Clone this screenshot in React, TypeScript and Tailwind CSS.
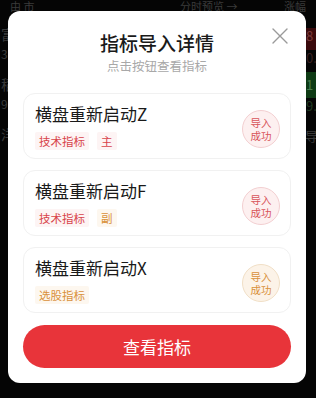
import React from 'react';

const items = [
  { name: '横盘重新启动Z', tags: [{ t: '技术指标', c: 'red' }, { t: '主', c: 'red' }], badge: 'red' },
  { name: '横盘重新启动F', tags: [{ t: '技术指标', c: 'red' }, { t: '副', c: 'orange' }], badge: 'red' },
  { name: '横盘重新启动X', tags: [{ t: '选股指标', c: 'orange' }], badge: 'orange' },
];

function Tag({ t, c }: { t: string; c: string }) {
  return (
    <span
      className={
        c === 'red'
          ? 'px-[4px] h-[18px] leading-[18px] text-[11.5px] rounded-[2px] bg-[#fdf4f4] text-[#d8434a]'
          : 'px-[4px] h-[18px] leading-[18px] text-[11.5px] rounded-[2px] bg-[#fdf7ef] text-[#d9903a]'
      }
    >
      {t}
    </span>
  );
}

export default function App() {
  return (
    <div
      className="relative w-[316px] h-[398px] bg-[#050505] overflow-hidden"
      style={{ fontFamily: '"Noto Sans CJK SC", "Noto Sans", sans-serif' }}
    >
      {/* dimmed page behind */}
      <div className="flex flex-col text-[#3a3a3a] text-[15px]">
        <div className="flex items-center h-[12px] px-[10px] text-[11px] leading-[12px]">
          <span className="w-[160px]">由 市</span>
          <span className="ml-[10px]">分时预览 →</span>
          <span className="ml-auto">涨幅</span>
        </div>
        <div className="flex flex-col pl-[1px] pt-[14px] gap-[4px] text-[14px] leading-[16px]">
          <span>富</span>
          <span className="text-[12px]">3</span>
          <span className="mt-[10px]">稻</span>
          <span className="text-[12px]">9</span>
          <span className="mt-[10px]">洋</span>
        </div>
      </div>
      <div className="absolute right-0 top-[28px] w-[12px] flex flex-col text-[13px] leading-[16px]">
        <span className="h-[22px] bg-[#3a0a0c] text-[#7a3a3a] pl-[2px]">8</span>
        <span className="h-[22px] text-[#3a2020] pl-[2px]">0.</span>
        <span className="h-[26px] bg-[#0e3a14] text-[#4a7a4a] pl-[2px] leading-[26px]">1</span>
        <span className="h-[22px] text-[#203a20] pl-[2px]">9.</span>
        <span className="h-[22px] mt-[8px] text-[#3a3a3a] pl-[1px]">导</span>
      </div>

      {/* dialog */}
      <div className="absolute left-[8px] top-[11px] w-[298px] h-[372px] bg-white rounded-[12px] flex flex-col px-[15px]">
        <div className="relative flex flex-col items-center pt-[20px]">
          <div className="text-[19px] leading-[24px] font-medium text-[#1a1a1a]">指标导入详情</div>
          <div className="text-[12.5px] leading-[18px] mt-[2px] text-[#a8a8a8]">点击按钮查看指标</div>
          <button className="absolute right-[2px] top-[16px] w-[18px] h-[18px]">
            <svg viewBox="0 0 18 18" width="18" height="18" fill="none" stroke="#9a9a9a" strokeWidth="1.4" strokeLinecap="round">
              <path d="M2 2 L16 16 M16 2 L2 16" />
            </svg>
          </button>
        </div>

        <div className="flex flex-col gap-[11px] mt-[18px]">
          {items.map((it) => (
            <div
              key={it.name}
              className="h-[66px] rounded-[12px] border border-[#f1f1f1] flex items-center pl-[11px] pr-[10px]"
            >
              <div className="flex flex-col flex-1">
                <div className="text-[17px] leading-[22px] text-[#1a1a1a]">{it.name}</div>
                <div className="flex gap-[8px] mt-[7px]">
                  {it.tags.map((tg) => (
                    <Tag key={tg.t} t={tg.t} c={tg.c} />
                  ))}
                </div>
              </div>
              <div
                className={
                  it.badge === 'red'
                    ? 'w-[38px] h-[38px] rounded-full border border-[#f3cfd1] bg-[#fdf0f0] text-[#d8545a] flex flex-col items-center justify-center text-[10.5px] leading-[13px] mt-[6px]'
                    : 'w-[38px] h-[38px] rounded-full border border-[#f1dfc6] bg-[#fcf3e8] text-[#d9903a] flex flex-col items-center justify-center text-[10.5px] leading-[13px] mt-[6px]'
                }
              >
                <span>导入</span>
                <span>成功</span>
              </div>
            </div>
          ))}
        </div>

        <button className="mt-[12px] h-[43px] rounded-full bg-[#e8343a] text-white text-[17px]">
          查看指标
        </button>
      </div>
    </div>
  );
}
